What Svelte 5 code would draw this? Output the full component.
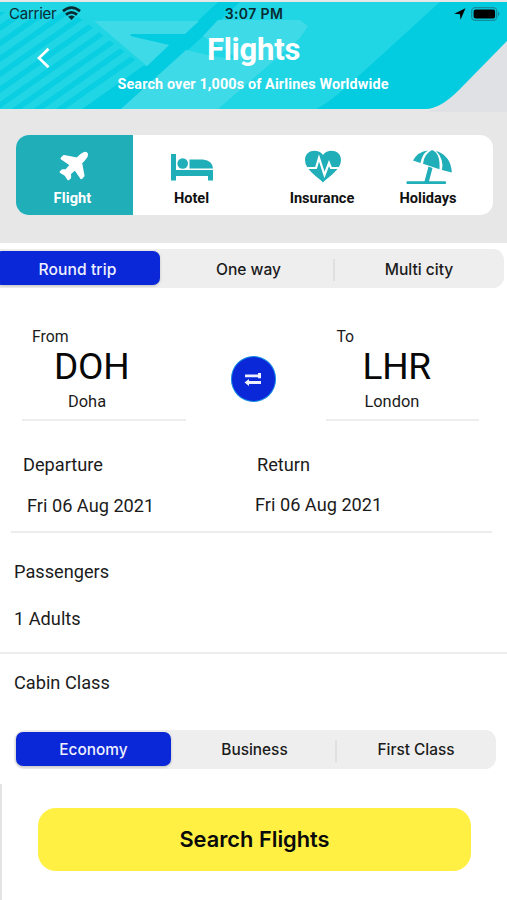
<script>
  const trips = ['Round trip', 'One way', 'Multi city'];
  const cabins = ['Economy', 'Business', 'First Class'];
  const stripes = [-142, -120, -98, -76, -54, -32, -10, 12, 34, 56];
  let trip = $state(0);
  let cabin = $state(0);
</script>

<main>
  <header>
    <svg class="art" width="507" height="112" viewBox="0 0 507 112">
      <defs>
        <clipPath id="card"><path d="M0 2H507V41L459 90Q440 109 426 109H0Z" /></clipPath>
        <clipPath id="left"><path d="M0 12H72L138 62L92 110H0Z" /></clipPath>
      </defs>
      <path d="M507 41V112H426Q440 109 459 90Z" fill="#dfe1e4" />
      <g clip-path="url(#card)">
        <path d="M0 0H507V112H0Z" fill="#03cce1" />
        <path d="M0 0H442L352 82Q326 106 310 112H0Z" fill="#20d5e4" />
        <g clip-path="url(#left)">
          {#each stripes as x}
            <path d="M{x} 112L{x + 160} 0" stroke="#0acee2" stroke-width="5.5" />
          {/each}
        </g>
        <path d="M218 2H240L188 50L121 112H78L143 66H147L169 45L130 36V33H185Z" fill="#03cce1" />
        <path d="M94 21H199L185 34H131Q129 36 134 37L169 45L147 66Z" fill="#3fdae7" />
        <path d="M218 20H300L308 26L300 38L218 109H121L186 50L212 56L240 60L203 36Z" fill="#3fdae7" />
      </g>
    </svg>
    <div class="status">
      <span class="carrier">Carrier</span>
      <svg class="wifi" width="19" height="15" viewBox="0 0 19 15">
        <g fill="none" stroke="#082b32" stroke-width="2.7">
          <path d="M1 5.1Q9.5-2 18 5.1" /><path d="M4 8.6Q9.5 4 15 8.6" />
        </g>
        <path d="M6.2 10.8Q9.5 8.2 12.8 10.8L9.5 14Z" fill="#082b32" />
      </svg>
      <span class="time">3:07 PM</span>
      <svg class="nav" width="12" height="12" viewBox="0 0 12 12"><path d="M.2 5.8L11.5.3L6.5 11.7L6 6.3Z" /></svg>
      <svg class="battery" width="30" height="15" viewBox="0 0 30 15">
        <rect x=".7" y=".7" width="25" height="12.6" rx="3.5" fill="none" stroke="#158d9d" stroke-width="1.3" />
        <rect x="2.6" y="2.5" width="21.5" height="9" rx="2" />
        <path d="M27 4.5Q30 7 27 9.5Z" fill="#158d9d" />
      </svg>
    </div>
    <svg class="back" width="14" height="22" viewBox="0 0 14 22"><path d="M11.5 1.8L2 11L11.5 20.2" fill="none" stroke="#fff" stroke-width="2.7" /></svg>
    <h1>Flights</h1>
    <p>Search over 1,000s of Airlines Worldwide</p>
  </header>

  <section class="services">
    <nav>
      <div class="service on">
        <svg width="32" height="32" viewBox="0 0 32 32"><path fill="#fff" stroke="#fff" stroke-width="2.4" stroke-linejoin="round" d="M29.3 2.3Q31 4 27.6 8L24 12L26.3 24.8L24.4 27L18 17.8L12.8 22.5L13 26.6L11.3 28L8.4 23.6L3.8 21L5.3 19.5L9.2 19.4L14 13.7L4.8 7.4L6.8 5.3L20 7.8L24 4.2Q27.8.8 29.3 2.3Z" /></svg>
        <b>Flight</b>
      </div>
      <div class="service hotel">
        <svg width="44" height="32" viewBox="0 0 44 32"><g fill="#20aeb8"><path d="M1 3H6V19H43V29.5H38V25H6V29.5H1Z" /><circle cx="12.7" cy="12.5" r="5.3" /><path d="M19.5 8.5H33Q42.5 9.5 43 17.5H19.5Z" /></g></svg>
        <b>Hotel</b>
      </div>
      <div class="service insurance">
        <svg width="40" height="34" viewBox="0 0 40 34"><path d="M21 33.5C15 27 3 21 3 11C3 1 16-1 21 6C26-1 39 1 39 11C39 21 27 27 21 33.5Z" fill="#20aeb8" /><path d="M2 19H14L17 9L22.5 26L27 14L29 19H40" fill="none" stroke="#fff" stroke-width="2.2" /></svg>
        <b>Insurance</b>
      </div>
      <div class="service holidays">
        <svg width="48" height="36" viewBox="0 0 48 36"><g fill="#20aeb8"><path d="M9 11.5Q14 2.5 24 1.5Q18 5 16.5 14Z" /><path d="M19 14.8Q20 5 28 1Q36.5 4 35.5 20.3Z" /><path d="M32 1.8Q47 7 47.8 23.5L38 21Q40 10 32 1.8Z" /><path d="M24.5 17.5L28.5 19L25 32.3H41.5Q43 33.7 41.5 35H3Q1.5 33.7 3 32.3H20.5Z" /></g></svg>
        <b>Holidays</b>
      </div>
    </nav>
  </section>

  <div class="segments trip">
    {#each trips as name, i}
      <button class:active={trip === i} onclick={() => (trip = i)}>{name}</button>
    {/each}
  </div>

  <section class="route">
    <div class="place from"><small>From</small><strong>DOH</strong><span>Doha</span></div>
    <button class="swap" aria-label="Swap">
      <svg width="18" height="16" viewBox="0 0 18 16"><g fill="#eef0ff"><path d="M1 3.4H14V2H17V7.3H14V6.2H1Z" /><path d="M.5 11.5L5 8V10.1H17V13H5V15Z" /></g></svg>
    </button>
    <div class="place to"><small>To</small><strong>LHR</strong><span>London</span></div>
  </section>

  <section class="dates">
    <div class="departure"><span>Departure</span><span class="date">Fri 06 Aug 2021</span></div>
    <div class="return"><span>Return</span><span class="date">Fri 06 Aug 2021</span></div>
  </section>

  <section class="passengers"><span>Passengers</span><span class="adults">1 Adults</span></section>

  <section class="cabin">
    <span class="label">Cabin Class</span>
    <div class="segments classes">
      {#each cabins as name, i}
        <button class:active={cabin === i} onclick={() => (cabin = i)}>{name}</button>
      {/each}
    </div>
  </section>

  <footer><button class="search">Search Flights</button></footer>
</main>

<style>
  :global(body) { margin: 0; background: #fff; }
  main { width: 507px; height: 900px; display: flex; flex-direction: column; background: #fff; color: #1b1b1b; font-family: Roboto, sans-serif; overflow: hidden; }
  main * { box-sizing: border-box; }
  button { border: 0; padding: 0; background: none; color: inherit; font: inherit; }
  span, b, strong, small, h1, p { white-space: nowrap; }
  header { position: relative; height: 112px; flex: none; background: #e7e7e7; color: #fff; text-align: center; }
  .art { position: absolute; left: 0; top: 0; }
  .status { position: relative; height: 28px; display: flex; align-items: center; padding-left: 9px; font: 15px/28px Inter, sans-serif; color: #082b32; }
  .carrier { width: 53px; text-align: left; letter-spacing: -.25px; }
  .wifi { margin-top: -1px; }
  .time { margin-left: 143px; width: 60px; font-weight: 600; font-size: 14px; letter-spacing: .4px; }
  .nav { margin-left: 170px; }
  .battery { margin-left: 5px; }
  .back { position: absolute; left: 37px; top: 47px; }
  h1 { position: relative; margin: 4px 0 0; font-size: 31px; line-height: 36px; font-weight: 700; letter-spacing: -.25px; }
  p { position: relative; margin: 8px 0 0; padding-right: 1px; font-size: 14.4px; line-height: 18px; font-weight: 700; letter-spacing: .13px; }
  .services { height: 131px; flex: none; background: #e7e7e7; padding: 23px 14px 0 16px; }
  nav { display: flex; height: 80px; background: #fff; border-radius: 13px; overflow: hidden; }
  .service { width: 117px; flex: none; display: flex; flex-direction: column; align-items: center; justify-content: flex-end; padding-bottom: 8px; color: #111; }
  .service svg { flex: none; margin-bottom: 6px; }
  .service b { font-size: 14.6px; line-height: 18px; }
  .on { background: #20aeb8; color: #fff; padding-right: 4px; }
  .service.on b { letter-spacing: .1px; }
  .insurance { width: 144px; }
  .holidays { width: 68px; }
  .service.holidays svg { margin-bottom: 4px; }
  .segments { display: flex; background: #eee; flex: none; border-radius: 11px; font: 500 15.6px/36px Inter, sans-serif; }
  .segments button { flex: 1; position: relative; }
  .segments button + button + button::before { content: ''; position: absolute; left: -1px; top: 8px; width: 2px; height: 22px; background: #e0e0e0; }
  .segments .active { background: #0b28d8; color: #eef0ff; border-radius: 7px; box-shadow: 0 1px 3px #0003; }
  .trip { margin: 6px 3px 0 -12px; height: 39px; padding: 2px 0 3px 7px; }
  .trip button { padding-top: 1px; }
  .trip button:nth-child(1) { flex: 0 0 165px; letter-spacing: .1px; }
  .trip button:nth-child(2) { flex: 0 0 174px; padding-left: 3px; }
  .route { height: 133px; display: flex; padding: 0 28px 0 22px; flex: none; }
  .place { width: 164px; border-bottom: 2px solid #ededed; display: flex; flex-direction: column; padding-top: 39px; }
  .place small { font-size: 15.8px; line-height: 20px; margin-left: 10px; }
  .place strong { font-size: 37px; line-height: 40px; font-weight: 400; margin-left: 32px; color: #080808; letter-spacing: -.2px; }
  .place span { font-size: 16.4px; line-height: 20px; margin: 5px 0 0 46px; }
  .to { width: 153px; margin-left: 50px; }
  .to strong { margin-left: 36px; }
  .to span { margin-left: 38px; }
  .swap { width: 46px; height: 46px; margin: 68px 0 0 45px; border-radius: 50%; background: #0b28d8; border: 1px solid #168ee5; display: grid; place-items: center; }
  .dates { display: flex; height: 112px; margin: 0 15px 0 11px; border-bottom: 2px solid #ececec; font-size: 18.2px; flex: none; }
  .dates div, .passengers { display: flex; flex-direction: column; line-height: 24px; }
  .dates div { padding: 32px 0 0 12px; width: 233px; }
  .dates .return { padding-left: 13px; }
  .dates .date { margin: 17px 0 0 4px; }
  .dates .return .date { margin: 16px 0 0 -2px; }
  .passengers { height: 121px; border-bottom: 2px solid #ececec; padding: 27px 0 0 14px; font-size: 18.2px; flex: none; }
  .adults { margin-top: 23px; }
  .cabin { height: 130px; padding: 17px 11px 0 14px; flex: none; }
  .label { display: block; font-size: 18.2px; line-height: 24px; }
  .classes { height: 39px; margin-top: 35px; padding: 2px 0 3px 2px; font-size: 15.4px; }
  .classes button:nth-child(1) { flex: 0 0 155px; }
  .classes button:nth-child(2) { flex: 0 0 165px; padding-left: 2px; }
  footer { height: 116px; border-left: 2px solid #e3e3e3; padding: 24px 36px 0; flex: none; }
  .search { width: 433px; height: 63px; border-radius: 18px; background: #fff043; color: #0a0a0a; font: 600 21.8px/63px Inter, sans-serif; }
</style>
